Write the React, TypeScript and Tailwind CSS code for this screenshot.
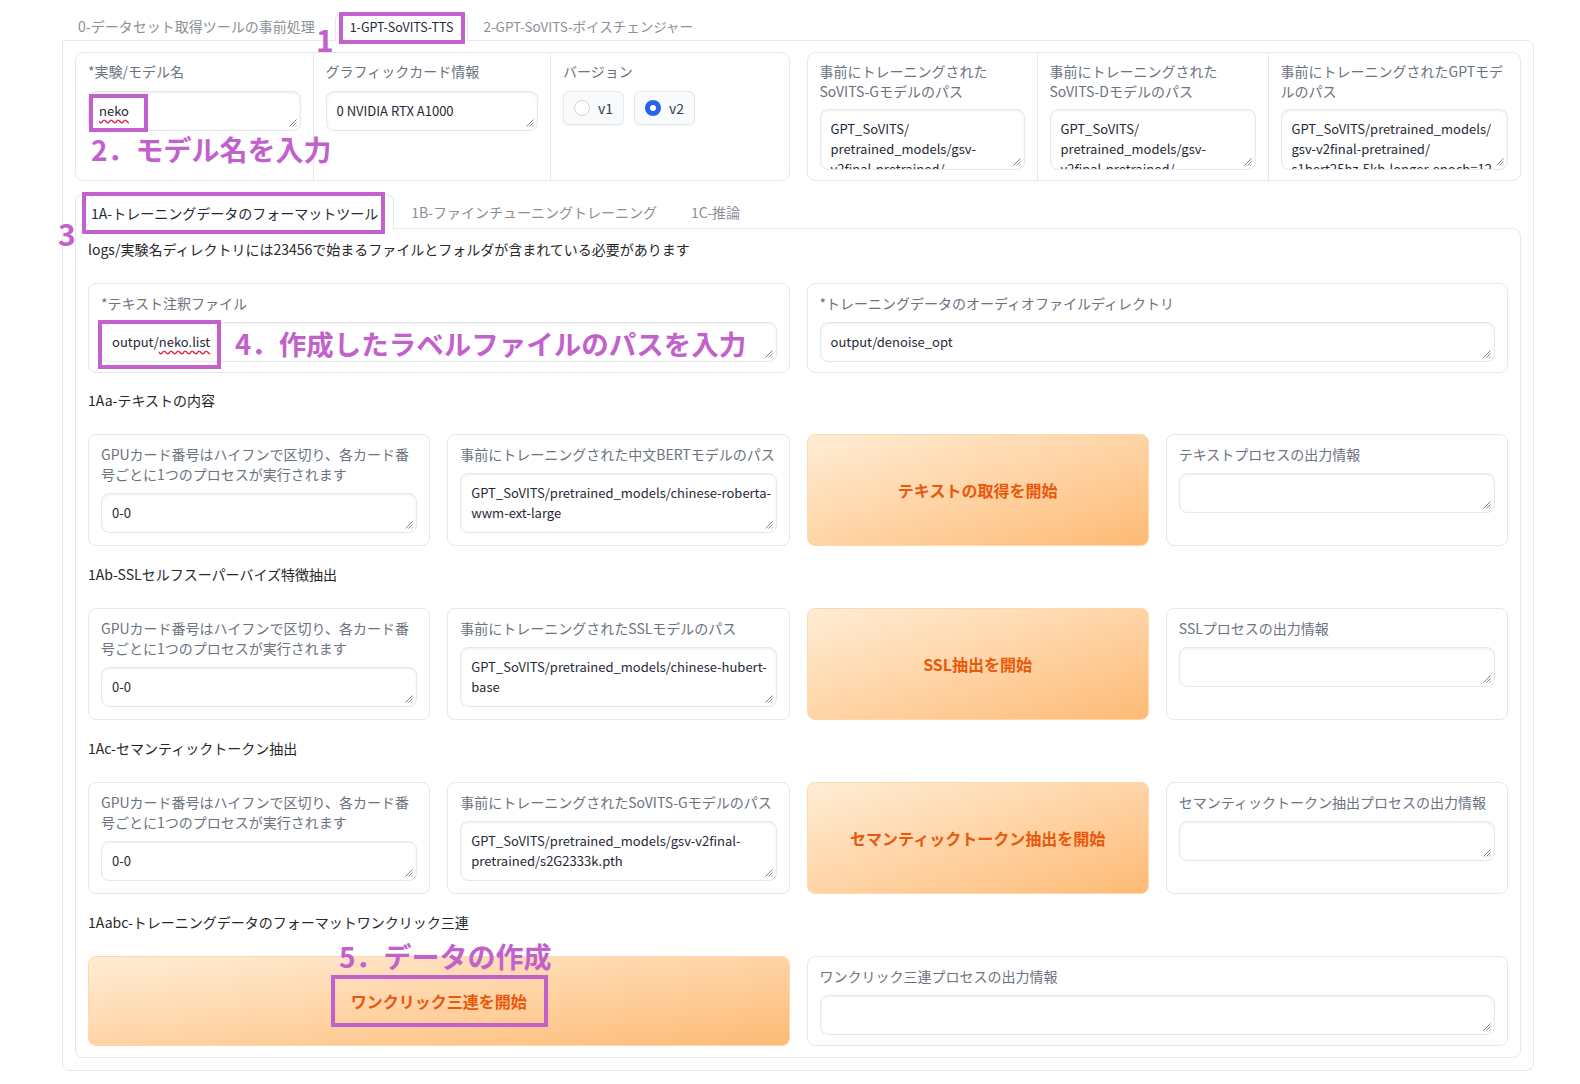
import React from "react";

const Grip = () => (
  <svg className="absolute right-[3px] bottom-[3px]" width="9" height="9" viewBox="0 0 9 9">
    <path d="M8.5 1.5L1.5 8.5M8.5 4.5L4.5 8.5M8.5 7.5L7.5 8.5" stroke="#7c8089" strokeWidth="1" />
  </svg>
);

function Area({ h, children }: { h: string; children?: React.ReactNode }) {
  return (
    <div
      className={`relative overflow-hidden whitespace-nowrap rounded-lg border border-[#e5e7eb] bg-white px-[10px] pt-[9px] text-[13px] leading-[20px] text-[#1f2937] shadow-[inset_0_1px_3px_rgba(0,0,0,0.07)] ${h}`}
    >
      {children}
      <Grip />
    </div>
  );
}

function Label({ children }: { children: React.ReactNode }) {
  return <div className="text-[14px] leading-[20px] text-[#6b7280]">{children}</div>;
}

function Block({
  label,
  h,
  value,
  pad = "pt-[9px] pb-[12px]",
}: {
  label: React.ReactNode;
  h: string;
  value?: React.ReactNode;
  pad?: string;
}) {
  return (
    <div className={`flex min-w-0 flex-col gap-[9px] rounded-lg border border-[#e5e7eb] bg-white px-[12px] ${pad}`}>
      <Label>{label}</Label>
      <Area h={h}>{value}</Area>
    </div>
  );
}

function OrangeButton({ children }: { children: React.ReactNode }) {
  return (
    <div className="flex min-w-0 items-center justify-center rounded-lg border border-[#fed7aa] bg-gradient-to-br from-[#ffedd5] to-[#fdba74] text-[16px] font-bold text-[#ea580c]">
      {children}
    </div>
  );
}

function Section({ children, mt = "mt-[18px]" }: { children: React.ReactNode; mt?: string }) {
  return <div className={`${mt} text-[14px] leading-[20px] text-[#27272a]`}>{children}</div>;
}

const gpuLabel = (
  <>
    GPUカード番号はハイフンで区切り、各カード番
    <br />
    号ごとに1つのプロセスが実行されます
  </>
);

const purple = "z-20 border-[4px] border-[#c261cc]";

export default function App() {
  return (
    <div className="relative h-[1084px] w-full overflow-hidden bg-white font-['Noto_Sans_CJK_JP',sans-serif] text-[#1f2937]">
      <div className="ml-[62px] w-[1472px] pt-[12px]">
        {/* top tabs */}
        <div className="flex h-[28px] items-stretch text-[14px]">
          <div className="flex items-center px-[16px] text-[#8b8f97]">0-データセット取得ツールの事前処理</div>
          <div className="relative z-10 ml-[4px] -mb-px flex items-center rounded-t-lg border border-b-0 border-[#e5e7eb] bg-white px-[14px] text-[12.5px] text-[#1f2937]">
            1-GPT-SoVITS-TTS
          </div>
          <div className="flex items-center px-[15px] text-[13.5px] text-[#8b8f97]">2-GPT-SoVITS-ボイスチェンジャー</div>
        </div>

        {/* outer panel */}
        <div className="rounded-b-lg rounded-tr-lg border border-[#e5e7eb] px-[12px] pt-[11px] pb-[12px]">
          {/* row 1 */}
          <div className="grid grid-cols-2 gap-[17px]">
            <div className="grid min-w-0 grid-cols-3 divide-x divide-[#e5e7eb] rounded-lg border border-[#e5e7eb] bg-white">
              <div className="flex min-w-0 flex-col gap-[10px] px-[12px] pt-[8px] pb-[10px]">
                <Label>*実験/モデル名</Label>
                <Area h="h-[40px]">
                  <span className="underline decoration-[#e11d48] decoration-wavy underline-offset-[3px]">neko</span>
                </Area>
              </div>
              <div className="flex min-w-0 flex-col gap-[10px] px-[12px] pt-[8px] pb-[10px]">
                <Label>グラフィックカード情報</Label>
                <Area h="h-[40px]">0 NVIDIA RTX A1000</Area>
              </div>
              <div className="flex min-w-0 flex-col gap-[10px] px-[12px] pt-[8px] pb-[10px]">
                <Label>バージョン</Label>
                <div className="flex gap-[10px] text-[14px] text-[#374151]">
                  <div className="flex h-[34px] items-center gap-[8px] rounded-md border border-[#e5e7eb] bg-[#f9fafb] px-[10px] shadow-[0_1px_2px_rgba(0,0,0,0.05)]">
                    <span className="h-[16px] w-[16px] rounded-full border border-[#d1d5db] bg-white" />
                    <span>v1</span>
                  </div>
                  <div className="flex h-[34px] items-center gap-[8px] rounded-md border border-[#e5e7eb] bg-[#f9fafb] px-[10px] shadow-[0_1px_2px_rgba(0,0,0,0.05)]">
                    <span className="flex h-[16px] w-[16px] items-center justify-center rounded-full bg-[#2563eb]">
                      <span className="h-[6px] w-[6px] rounded-full bg-white" />
                    </span>
                    <span>v2</span>
                  </div>
                </div>
              </div>
            </div>
            <div className="flex min-w-0 divide-x divide-[#e5e7eb] rounded-lg border border-[#e5e7eb] bg-white">
              <div className="flex w-[230px] shrink-0 flex-col gap-[8px] px-[12px] pt-[8px] pb-[10px]">
                <Label>
                  事前にトレーニングされた
                  <br />
                  SoVITS-Gモデルのパス
                </Label>
                <Area h="h-[61px]">
                  GPT_SoVITS/
                  <br />
                  pretrained_models/gsv-
                  <br />
                  v2final-pretrained/
                </Area>
              </div>
              <div className="flex w-[231px] shrink-0 flex-col gap-[8px] px-[12px] pt-[8px] pb-[10px]">
                <Label>
                  事前にトレーニングされた
                  <br />
                  SoVITS-Dモデルのパス
                </Label>
                <Area h="h-[61px]">
                  GPT_SoVITS/
                  <br />
                  pretrained_models/gsv-
                  <br />
                  v2final-pretrained/
                </Area>
              </div>
              <div className="flex min-w-0 flex-1 basis-0 flex-col gap-[8px] px-[12px] pt-[8px] pb-[10px]">
                <Label>
                  事前にトレーニングされたGPTモデ
                  <br />
                  ルのパス
                </Label>
                <Area h="h-[61px]">
                  GPT_SoVITS/pretrained_models/
                  <br />
                  gsv-v2final-pretrained/
                  <br />
                  s1bert25hz-5kh-longer-epoch=12-
                </Area>
              </div>
            </div>
          </div>

          {/* inner tabs */}
          <div className="mt-[13px] flex h-[34px] items-stretch text-[14px]">
            <div className="relative z-10 -mb-px flex items-center rounded-t-lg border border-b-0 border-[#e5e7eb] bg-white px-[15px] pt-[2px] text-[#1f2937]">
              1A-トレーニングデータのフォーマットツール
            </div>
            <div className="flex items-center px-[17px] pt-[2px] text-[#8b8f97]">1B-ファインチューニングトレーニング</div>
            <div className="flex items-center px-[17px] pt-[2px] text-[#8b8f97]">1C-推論</div>
          </div>
          <div className="rounded-b-lg rounded-tr-lg border border-[#e5e7eb] px-[12px] pt-[10px] pb-[11px]">
            <div className="text-[14px] leading-[20px] text-[#27272a]">
              logs/実験名ディレクトリには23456で始まるファイルとフォルダが含まれている必要があります
            </div>

            <div className="mt-[24px] grid grid-cols-2 gap-[17px]">
              <Block
                label="*テキスト注釈ファイル"
                h="h-[40px]"
                pad="pt-[9px] pb-[10px]"
                value={
                  <span>
                    output/
                    <span className="underline decoration-[#e11d48] decoration-wavy underline-offset-[3px]">neko.list</span>
                  </span>
                }
              />
              <Block
                label="*トレーニングデータのオーディオファイルディレクトリ"
                h="h-[40px]"
                pad="pt-[9px] pb-[10px]"
                value="output/denoise_opt"
              />
            </div>

            <Section mt="mt-[17px]">1Aa-テキストの内容</Section>
            <div className="mt-[24px] grid grid-cols-4 gap-[17px]">
              <Block label={gpuLabel} h="h-[40px]" value="0-0" />
              <Block
                label="事前にトレーニングされた中文BERTモデルのパス"
                h="h-[60px]"
                value={
                  <>
                    GPT_SoVITS/pretrained_models/chinese-roberta-
                    <br />
                    wwm-ext-large
                  </>
                }
              />
              <OrangeButton>テキストの取得を開始</OrangeButton>
              <Block label="テキストプロセスの出力情報" h="h-[40px]" />
            </div>

            <Section>1Ab-SSLセルフスーパーバイズ特徴抽出</Section>
            <div className="mt-[24px] grid grid-cols-4 gap-[17px]">
              <Block label={gpuLabel} h="h-[40px]" value="0-0" />
              <Block
                label="事前にトレーニングされたSSLモデルのパス"
                h="h-[60px]"
                value={
                  <>
                    GPT_SoVITS/pretrained_models/chinese-hubert-
                    <br />
                    base
                  </>
                }
              />
              <OrangeButton>SSL抽出を開始</OrangeButton>
              <Block label="SSLプロセスの出力情報" h="h-[40px]" />
            </div>

            <Section>1Ac-セマンティックトークン抽出</Section>
            <div className="mt-[24px] grid grid-cols-4 gap-[17px]">
              <Block label={gpuLabel} h="h-[40px]" value="0-0" />
              <Block
                label="事前にトレーニングされたSoVITS-Gモデルのパス"
                h="h-[60px]"
                value={
                  <>
                    GPT_SoVITS/pretrained_models/gsv-v2final-
                    <br />
                    pretrained/s2G2333k.pth
                  </>
                }
              />
              <OrangeButton>セマンティックトークン抽出を開始</OrangeButton>
              <Block label="セマンティックトークン抽出プロセスの出力情報" h="h-[40px]" />
            </div>

            <Section>1Aabc-トレーニングデータのフォーマットワンクリック三連</Section>
            <div className="mt-[24px] grid grid-cols-2 gap-[17px]">
              <OrangeButton>ワンクリック三連を開始</OrangeButton>
              <Block label="ワンクリック三連プロセスの出力情報" h="h-[40px]" pad="pt-[9px] pb-[10px]" />
            </div>
          </div>
        </div>
      </div>

      {/* annotations */}
      <div className={`pointer-events-none absolute left-[339px] top-[12px] h-[32px] w-[126px] ${purple}`} />
      <div className="pointer-events-none absolute left-[316px] top-[22px] z-20 text-[30px] font-bold leading-[34px] text-[#c261cc]">1</div>
      <div className={`pointer-events-none absolute left-[89px] top-[94px] h-[38px] w-[59px] ${purple}`} />
      <div className="pointer-events-none absolute left-[91px] top-[132px] z-20 text-[28px] font-bold leading-[34px] text-[#c261cc]">
        2．モデル名を入力
      </div>
      <div className="pointer-events-none absolute left-[58px] top-[216px] z-20 text-[30px] font-bold leading-[34px] text-[#c261cc]">3</div>
      <div className={`pointer-events-none absolute left-[82px] top-[192px] h-[42px] w-[303px] ${purple}`} />
      <div className={`pointer-events-none absolute left-[98px] top-[320px] h-[49px] w-[123px] ${purple}`} />
      <div className="pointer-events-none absolute left-[235px] top-[326px] z-20 text-[27.5px] font-bold leading-[34px] text-[#c261cc]">
        4．作成したラベルファイルのパスを入力
      </div>
      <div className="pointer-events-none absolute left-[339px] top-[939px] z-20 text-[28px] font-bold leading-[34px] text-[#c261cc]">
        5．データの作成
      </div>
      <div className={`pointer-events-none absolute left-[331px] top-[975px] h-[52px] w-[217px] ${purple}`} />
    </div>
  );
}
